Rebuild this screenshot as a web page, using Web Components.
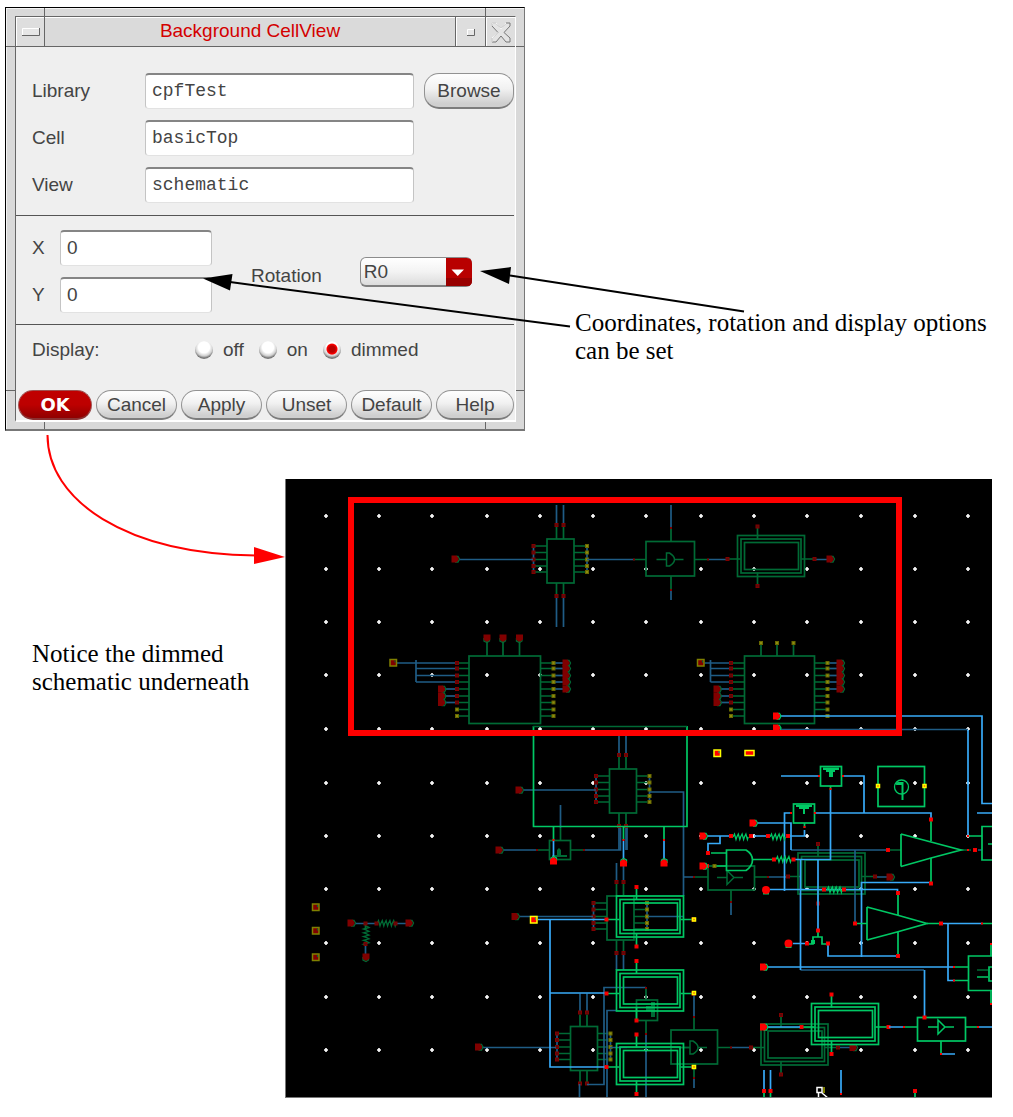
<!DOCTYPE html>
<html lang="en">
<head>
<meta charset="utf-8">
<meta name="viewport" content="width=device-width, initial-scale=1">
<title>Background CellView</title>
<style>
  body { margin: 0; background: #fff; }
</style>
</head>
<body>
<guide-figure></guide-figure>

<script>
const define = (name, html, setup) => {
  const template = document.createElement('template');
  template.innerHTML = html;
  customElements.define(name, class extends HTMLElement {
    connectedCallback() {
      if (this.shadowRoot) return;
      const root = this.attachShadow({ mode: 'open' });
      root.append(template.content.cloneNode(true));
      if (setup) setup(this, root);
    }
  });
};

/* ---- form parts ---- */

define('text-field', `
<style>
  :host { display: flex; align-items: center; height: 36px; min-width: 0; }
  label { width: var(--label-width, 113px); flex: none; }
  input {
    box-sizing: border-box; flex: 1; width: 0; min-width: 0; height: 36px; margin: 0; padding: 0 6px 1px;
    border: 1px solid #e2e2e2; border-top: 2px solid #858585; border-left-color: #c4c4c4; border-right-color: #c4c4c4;
    border-radius: 4px; background: #fff; color: #444; font: var(--field-font, 19px "Liberation Sans", sans-serif);
    outline: none;
  }
</style>
<label for="box"></label><input id="box" type="text">`, (el, root) => {
  root.querySelector('label').textContent = el.getAttribute('label');
  root.querySelector('input').value = el.getAttribute('value');
});

define('pill-button', `
<style>
  :host { display: flex; min-width: 0; }
  button {
    flex: 1; min-width: 0; margin: 0; padding: 0; border: 1px solid #929292; border-bottom: 2px solid #7c7c7c;
    border-radius: 15px; color: #444; font: inherit; line-height: 26px;
    background: linear-gradient(#fdfdfd 5%, #f1f1f1 45%, #cfcfcf 90%);
  }
  :host([primary]) button {
    border-color: #a05050; border-bottom-color: #8a3030; color: #fff;
    font: bold 18px "DejaVu Sans", sans-serif; line-height: 26px;
    background: linear-gradient(#c00000, #bd0000 50%, #900000);
  }
</style>
<button type="button"><slot></slot></button>`);

define('choice-list', `
<style>
  :host { display: flex; align-items: center; }
  .name { width: 163px; flex: none; }
  .choices { display: flex; gap: 15px; }
  label { display: flex; align-items: center; gap: 10px; line-height: 24px; }
  input {
    appearance: none; width: 18px; height: 18px; margin: 0; border-radius: 50%;
    background: radial-gradient(circle at 50% 35%, #fff 38%, #d0d0d0 58%, #777 72%);
  }
  input:checked {
    background: radial-gradient(circle at 50% 45%, #b00 0 3px, #f00 5px, transparent 6px),
      radial-gradient(circle at 50% 35%, #fff 38%, #d0d0d0 58%, #777 72%);
  }
</style>
<span class="name" id="name"></span>
<div class="choices" role="radiogroup" aria-labelledby="name"></div>`, (el, root) => {
  root.querySelector('.name').textContent = el.getAttribute('label');
  for (const option of el.getAttribute('options').split(' ')) {
    const label = document.createElement('label');
    const input = document.createElement('input');
    input.type = 'radio';
    input.name = 'display';
    input.checked = option === el.getAttribute('value');
    label.append(input, option);
    root.querySelector('.choices').append(label);
  }
});

define('rotation-select', `
<style>
  :host { display: flex; align-items: center; gap: 38px; }
  label { padding-top: 8px; }
  .wrap { position: relative; width: 112px; height: 30px; }
  select {
    appearance: none; box-sizing: border-box; width: 100%; height: 100%; margin: 0; padding: 0 3px;
    border: 1px solid #8c8c8c; border-bottom: 2px solid #808080; border-radius: 6px; color: #444; font: inherit;
    background: linear-gradient(#fff, #f3f3f3 50%, #dcdcdc);
  }
  svg { position: absolute; right: 0; top: 1px; width: 26px; height: 28px; pointer-events: none; }
</style>
<label for="rotation">Rotation</label>
<div class="wrap">
  <select id="rotation"><option>R0</option><option>R90</option><option>R180</option><option>R270</option></select>
  <svg viewBox="0 0 26 28"><path d="M0 0H21Q26 0 26 6V22Q26 28 21 28H0Z" fill="#b80000"/><path d="M0 20H26V22Q26 28 21 28H0Z" fill="#980000"/><path d="M5.500 11.500H18L11.700 18Z" fill="#fff"/></svg>
</div>`);

/* ---- dialog window ---- */

define('title-bar', `
<style>
  :host { display: flex; height: 29px; border-bottom: 1px solid #666; background: #dadada; box-shadow: inset 1px 1px #fff; }
  button { width: 30px; flex: none; margin: 0; padding: 0; border: 0; border-left: 1px solid #666; background: #dedede; box-shadow: inset 1px 1px #fff; }
  button:first-of-type { width: 29px; border-left: 0; border-right: 1px solid #666; }
  h1 { flex: 1; margin: 0; color: #d40000; font: 19px "Liberation Sans", sans-serif; line-height: 28px; text-align: center; }
  svg { display: block; }
</style>
<button type="button" aria-label="Window menu"><svg width="28" height="29"><rect x="6" y="11" width="17" height="7" fill="#e6e6e6"/><path d="M6.500 18V11.500H23" stroke="#fff" fill="none"/><path d="M6 18.500H23.500V11" stroke="#666" fill="none"/></svg></button>
<h1><slot></slot></h1>
<button type="button" aria-label="Minimize"><svg width="29" height="29"><rect x="11" y="12" width="7" height="6" fill="#e6e6e6"/><path d="M11.500 18V12.500H18" stroke="#fff" fill="none"/><path d="M11 18.500H18.500V12" stroke="#666" fill="none"/></svg></button>
<button type="button" aria-label="Close"><svg width="29" height="29"><path d="M6 6H10L15 12L20 6H24V9L18 15.500L24 21V25H20L15 19L10 25H6V21L12 15.500L6 9Z" fill="#e4e4e4" stroke="#777"/><path d="M6 21V25M6 9V6H10L15 12L20 6M6 21L12 15.500" stroke="#fff" fill="none"/></svg></button>`);

define('cell-dialog', `
<style>
  :host {
    display: block; position: relative; box-sizing: border-box; padding: 8px 8px 7px 9px;
    border: 1px solid #000; border-right-color: #777; border-bottom: 2px solid #777;
    background: #d9d9d9; box-shadow: inset 1px 1px #f4f4f4;
    color: #444; font: 19px "Liberation Sans", sans-serif;
  }
  .inner { border: 1px solid #666; border-right-color: #fff; border-bottom: 2px solid #fff; background: #efefef; }
  .fields { display: grid; grid-template-columns: 382px 1fr; gap: 11px 10px; padding: 26px 1px 12px 16px; --field-font: 18px "Liberation Mono", monospace; }
  text-field { grid-column: 1; }
  .fields pill-button { grid-column: 2; grid-row: 1; }
  hr { margin: 0 1px 0 0; border: 0; border-top: 1px solid #555; }
  .place { display: flex; gap: 39px; padding: 14px 16px 11px; }
  .coords { display: grid; grid-template-columns: minmax(0, 1fr); gap: 11px; width: 180px; --label-width: 28px; }
  .display { padding: 13px 16px 28px; }
  .actions { display: flex; gap: 4px; padding: 0 1px 0 2px; height: 30px; }
  .actions pill-button { flex: 81; }
  .actions pill-button:first-child { flex: 74; }
  .actions pill-button:last-child { flex: 78; }
  i { position: absolute; background: #666; }
  .t { top: 0; width: 1px; height: 9px; }
  .b { bottom: 0; width: 1px; height: 7px; }
  .l { left: 0; width: 9px; height: 1px; }
  .r { right: 0; width: 8px; height: 1px; }
  .x1 { left: 38px; } .x2 { right: 38px; } .y1 { top: 38px; } .y2 { bottom: 38px; }
</style>
<div class="inner">
  <title-bar>Background CellView</title-bar>
  <form>
    <div class="fields">
      <text-field label="Library" value="cpfTest"></text-field>
      <pill-button>Browse</pill-button>
      <text-field label="Cell" value="basicTop"></text-field>
      <text-field label="View" value="schematic"></text-field>
    </div>
    <hr>
    <div class="place">
      <div class="coords">
        <text-field label="X" value="0"></text-field>
        <text-field label="Y" value="0"></text-field>
      </div>
      <rotation-select></rotation-select>
    </div>
    <hr>
    <choice-list class="display" label="Display:" options="off on dimmed" value="dimmed"></choice-list>
    <div class="actions">
      <pill-button primary>OK</pill-button><pill-button>Cancel</pill-button><pill-button>Apply</pill-button>
      <pill-button>Unset</pill-button><pill-button>Default</pill-button><pill-button>Help</pill-button>
    </div>
  </form>
</div>
<i class="t x1"></i><i class="t x2"></i><i class="b x1"></i><i class="b x2"></i>
<i class="l y1"></i><i class="l y2"></i><i class="r y1"></i><i class="r y2"></i>`);

/* ---- schematic canvas ---- */

define('schematic-view', `
<style>
  :host { display: block; }
  svg { display: block; width: 100%; height: auto; background: #000; }
</style>
<svg viewBox="285 479 707 619" role="img" aria-label="Schematic with dimmed background cellview"></svg>`, (el, root) => {
  const G = '#00c864', g = '#006a35', B = '#38aaf8', b = '#1f5c85', R = '#f00', r = '#800000', Y = '#ff0', y = '#808000';
  let out = '';
  const line = (c, ...ds) => { out += `<path d="${ds.map(d => 'M' + d).join('')}" fill="none" stroke="${c}" stroke-width="1.700"/>`; };
  const box = (c, x, t, w, h) => { out += `<rect x="${x}" y="${t}" width="${w}" height="${h}" fill="none" stroke="${c}" stroke-width="1.700"/>`; };
  const dimPin = (c, edge, ...ps) => ps.forEach(([x, t]) => { out += `<rect x="${x - 1.5}" y="${t - 1.5}" width="3" height="3" fill="${c}" stroke="${edge}"/>`; });
  const redPin = (...ps) => dimPin('#5a0a0a', '#800000', ...ps);
  const brightPin = (...ps) => dimPin(R, '#f00000', ...ps);
  const yellowPin = (...ps) => dimPin('#8c8c10', '#686800', ...ps);
  const spot = (c, ...ps) => ps.forEach(([x, t]) => { out += `<rect x="${x - 1}" y="${t - 1}" width="2" height="2" fill="${c}"/>`; });
  const litPin = (...ps) => ps.forEach(([x, t]) => { out += `<rect x="${x - 1.5}" y="${t - 1.5}" width="3" height="3" fill="#f60" stroke="#ff0" stroke-width="1.500"/>`; });
  const flag = (c, e, turn, ...ps) => ps.forEach(([x, t]) => {
    out += `<g transform="translate(${x} ${t}) rotate(${turn})"><path d="M1 -2.500H3L4.500 0L3 3H0" fill="none" stroke="${e}" stroke-width="1.300"/><path d="M-3.500 -3.500H1.500L3.500 -1V1L1.500 3.500H-3.500Z" fill="${c}"/></g>`;
  });
  const tag = (x, t, c, f) => { out += `<rect x="${x - 3}" y="${t - 3}" width="6.500" height="6.500" fill="${f}" stroke="${c}" stroke-width="1.500"/><path d="M${x + 2} ${t - 2}v2" stroke="${c === Y ? G : g}"/>`; };
  const res = (c, x, t, n, turn = 0) => { let d = '0 0'; for (let i = 0; i < n; i++) d += `l1.500 -3l1.500 5.500l.8 -2.500`; out += `<path transform="translate(${x} ${t}) rotate(${turn})" d="M${d}" fill="none" stroke="${c}" stroke-width="1.300"/>`; };
  const gate = (c, x, t) => { out += `<path d="M${x} ${t - 6.5}h3q5 3 5 6.500q0 3.500 -5 6.500h-3ZM${x - 10} ${t}h10M${x + 8} ${t}h9" fill="none" stroke="${c}" stroke-width="1.500"/>`; };
  const buffer = (c, x, t) => { out += `<path d="M${x} ${t - 7}l7 7l-7 7ZM${x - 10} ${t}h10M${x + 7} ${t}h9" fill="none" stroke="${c}" stroke-width="1.500"/>`; };

  // grid
  for (const gx of [326, 379, 432, 487, 540, 593, 646, 701, 754, 807, 861, 915, 968])
    for (const gy of [516, 569, 622, 675, 729, 783, 836, 889, 943, 997, 1050])
      out += `<path d="M${gx - 2} ${gy}h4M${gx} ${gy - 2}v4" stroke="#fff" stroke-width="1.600"/>`;

  // small dim block with five pins on each side
  const chip = (x, t, up, down) => {
    box(g, x, t, 27, 44);
    const ys = [7, 13.5, 20.5, 27, 33].map(v => t + v);
    line(b, `${x - 13.5} ${ys[0]}V${ys[4]}`, `${x + 40} ${ys[0]}V${ys[4]}`);
    ys.forEach(v => line(g, `${x - 12} ${v}H${x}`, `${x + 27} ${v}H${x + 38}`));
    ys.forEach(v => { redPin([x - 13.5, v]); yellowPin([x + 40, v]); });
    for (const c of [x + 9.5, x + 16.5]) {
      line(g, `${c} ${t}V${t - 12}`, `${c} ${t + 44}V${t + 56}`);
      line(b, `${c} ${t - 15}V${t - up}`, `${c} ${t + 59}V${t + down}`);
      redPin([c, t - 14], [c, t + 57]);
    }
  };
  chip(547, 539, 34, 88);
  chip(609.5, 769, 34, 81);
  chip(607, 896, 33, 74);
  chip(570.5, 1026.5, 33, 59);

  // triple-outlined block
  const triple = (dim, x, t) => {
    const c = dim ? g : G;
    box(c, x, t, 67, 41); box(c, x + 3.5, t + 3.5, 60, 34); box(c, x + 7, t + 7, 54, 27);
    line(c, `${x + 20} ${t - 8}V${t + 4}`, `${x + 20} ${t + 37}V${t + 50}`, `${x - 9} ${t + 23.5}H${x + 3}`, `${x + 64} ${t + 23.5}H${x + 76}`);
    (dim ? redPin : brightPin)([x + 20, t - 9], [x + 20, t + 50.5], [x - 10, t + 23.5], [x + 77, t + 23.5]);
  };

  // upper dim row
  line(b, '459 559.5H533', '587 559.5H634', '671 505V528', '671 590V600', '708 559.5H727', '816 559.5H827');
  line(g, '634 559.5H646', '671 528V541', '671 576V590', '694 559.5H708');
  flag(r, g, 0, [455, 559], [830, 559]);
  box(g, 646, 541.5, 48.500, 34.500); gate(g, 666.5, 559.5);
  spot(r, [634, 559.5], [671, 528], [671, 590], [708, 559.5]);
  triple(true, 737.5, 535.5);

  // large dim blocks
  const bank = [663, 668.5, 675.5, 682, 689, 696, 702.5, 709.5, 716];
  const large = (x, w, lx, rx, bus, fl, fr, tx) => {
    box(g, x, 656, w, 67.500);
    line(b, `${tx + 4} 663H${lx}`, `${bus} 660V682`, `${bus} 668.5H${lx}`, `${bus} 675.5H${lx}`, `${bus} 682H${lx}`);
    bank.forEach((v, i) => {
      line(g, `${lx} ${v}H${x}`, `${x + w} ${v}H${rx}`);
      if (i > 3 && i < 7) { line(b, `${fl} ${v}H${lx}`); flag(r, g, 0, [fl, v]); }
      if (i < 5) { line(b, `${rx} ${v}H${fr}`); flag(r, g, 0, [fr, v]); }
      (i < 7 ? redPin : yellowPin)([lx, v]); yellowPin([rx, v]);
    });
    tag(tx, 662.5, y, r);
  };
  large(469, 71.5, 457, 553.5, 416, 441.5, 566, 393);
  large(744.5, 70, 731, 827.5, 710.5, 717, 840, 700.5);
  line(g, '487 640V656', '503 640V656', '519.5 640V656', '761 645V656', '777 645V656', '793.5 645V656');
  flag(r, g, 90, [487, 638], [503, 638], [519.5, 638]);
  yellowPin([761, 643], [777, 643], [793.5, 643]);

  // left dim parts
  [907, 930.5, 957].forEach(v => tag(315.5, v, y, r));
  line(b, '355 923.5H376', '395 923.5H408', '365.5 944V956'); line(g, '365.5 924V930');
  res(g, 377, 923.5, 5); res(g, 366, 926, 5, 90);
  redPin([365.5, 923.5], [376.5, 923.5], [395.5, 923.5], [365.5, 944]);
  flag(r, g, 0, [351, 923], [409, 923]); flag(r, g, 90, [366, 957]);

  // centre dim wiring
  line(b, '523 790H596', '650 792H683.5V896', '560.5 805V828', '503 850H537', '584 850H620.5V828', '627 828V850', '683.5 877H694',
    '519 916.5H593', '648 916.5H683.5', '482 1047.5H556', '610 1047.5H627', '587 1084.500H604V987.500H646', '607 1098V1010.5H616', '646 1034V1098', '579.5 1084V1098',
    '731 902V915', '768 877H788', '876 877H888', '694 995V1017', '694 1078V1088', '731 1047.5H750', '838 1047.5H850');
  line(g, '537 850H549', '571 850H584', '560.5 828V840', '694 877H708', '731 890V902', '754 877H768', '627 1047.5H690', '694 1017V1030', '694 1067V1078', '717.5 1047.5H731', '646 989V1000', '646 1020V1034');
  flag(r, g, 0, [519, 790], [499, 850], [515, 916.5], [478.5, 1047], [890, 877], [853, 1047.5]);
  box(g, 549.5, 840.5, 21, 19); out += `<path d="M552 855h15v2h-15ZM557 855v-5l2-2l2 2v5Z" fill="${g}"/>`;
  box(g, 636.5, 1000, 21, 20.500); out += `<path d="M646 1006h5v-4h4v15h-4v-6h-5Z" fill="${g}"/>`;
  box(g, 708, 866, 46.500, 24); buffer(g, 727, 877.5);
  box(g, 671, 1030, 46.500, 34); gate(g, 690, 1047.5);
  spot(r, [537, 850], [584, 850], [694, 877], [768, 877], [731, 902], [694, 1017], [694, 1078], [731, 1047.5], [646, 988], [646, 1034]);
  triple(true, 798, 853); triple(true, 761, 1024);

  // bright frame
  line(G, '533.5 726V826.5H687V726', '553.5 827V840', '623.5 827V840', '664 827V840'); line(g, '533 726.5H687');
  line(B, '553.5 841V858', '623.5 841V860', '664 841V860');
  spot(R, [553.5, 840], [623.5, 840], [664, 840]);
  flag(R, G, -90, [553.5, 861], [623.5, 863], [664, 863]);

  // bright triples
  line(B, '538 919.5H607', '550 919.5V1067H607', '550 993H607');
  [896, 970, 1043.5].forEach(t => triple(false, 616.5, t));
  litPin([694, 919.5], [694, 993], [694, 1067]);
  tag(533.5, 919.5, Y, R);
  triple(false, 811.5, 1003.5);

  // right-hand wiring
  line(b, '780 729.5H968', '791 850H887', '855 850V923', '978 850H982', '800.5 970H924');
  line(B, '780 716H982V803.5H992', '968 730V836', '977 813H992', '781 776H819', '843 776H864V813', '830.5 790V859.5H794', '791 813H784.5V891', '815 813H931V819', '804.5 830V836H788',
    '757 823H791V850', '707 836H731', '754 836H768', '720 836V843.5H708V852', '800.5 859V970M924.5 970V1017', '818 860V930', '770 889.5H897.5V893', '861.5 957V882.5H931',
    '828 945V956H898', '793 943.5H806', '943 923.5H982', '948 924V980.5H955', '767 967H954', '767 1027H800', '889 1027H904', '978 1027H992', '941 1054H955', '764 1070V1091', '770.5 1070V1091', '841 1070V1094');
  line(G, '969 836H982', '931 820V841', '931 858V883', '752.500 859.500H773', '711 853H727', '716 866H727', '898 894V915', '898 932V956', '857 923.5H867', '927 923.5H941', '982 923.5H992',
    '955 967H968', '955 980.5H968', '991 944V956', '991 990V1004', '904 1027H917', '966 1027H978', '941 1041V1054', '830.5 786V790', '804.5 823V828', '764 1093V1098', '770.5 1093V1098', '915 1093V1098',
    '977 977H988', '992 967H989V981H992', '988 844H992');
  line(g, '890 850H901', '961 850H971', '977 970H988');
  box(G, 820.5, 766.5, 21, 19.500); out += `<path d="M823 767.500H839V770H835V772H833V777H829V772H826V770H823Z" fill="${G}"/>`;
  box(G, 793.500, 804, 21, 19); out += `<path d="M796 805H812V807H809V809H805V814H803V809H799V807H796Z" fill="${G}"/>`;
  box(G, 878, 766.500, 46.500, 40); out += `<circle cx="901.500" cy="787" r="7" fill="none" stroke="${G}" stroke-width="1.300"/><path d="M896 784.500l2-1.500h4.500v17M902 784h-5" fill="none" stroke="${G}" stroke-width="2"/>`;
  litPin([878, 786], [924.500, 786]);
  line(G, '901 834V866.5', '901 834L931 842L961 850L931 858L901 866.5', '867 907V940', '867 907L897 915L927 923.5L897 932L867 940');
  out += `<path d="M746 850H726.500V870.500H746Q752.500 866 752.500 860Q752.500 854 746 850Z" fill="none" stroke="${G}" stroke-width="1.700"/>`;
  line(G, '992 826.5H982V860H992', '992 956H968.500V990.5H992', '809 944H813V937H822V944H826', '818 931V937');
  out += `<rect x="811" y="940" width="4" height="4" fill="${G}"/>`;
  box(G, 917.5, 1017.5, 48, 23.500); buffer(G, 938, 1027);
  res(G, 733, 837, 4); res(G, 770, 837, 4); res(G, 776, 859.5, 4); res(G, 827, 890, 4);
  spot(R, [968, 836], [968, 850], [982, 923.500], [954, 967], [954, 980.5], [991, 944], [991, 1004], [904, 1027], [978, 1027], [941, 1054], [819, 776], [843, 776], [791, 813], [815, 813], [830.5, 789], [804.5, 827], [841, 1094]);
  brightPin([931, 819.5], [888, 850], [975, 850], [931, 883.5], [731, 836], [751, 836], [768, 836], [788, 836], [708, 853], [707, 866], [774, 859.5], [793.5, 859.5], [824, 889.5], [844, 889.5],
    [898, 893], [855, 923.5], [941, 923.5], [898, 956], [828, 943.5], [807, 943.5], [818, 930.5], [924.5, 1017.500], [764, 1091], [770.5, 1091], [915, 1091]);
  yellowPin([714.5, 866]);
  flag(R, G, 0, [776.500, 716], [776.500, 728], [753, 823], [703, 836], [703, 866], [763.500, 967], [763.500, 1027]);
  for (const [cx, cy] of [[766, 890], [788.500, 943.500]]) out += `<path d="M${cx - 3} ${cy + 3.500}h6" stroke="${G}" stroke-width="2"/><circle cx="${cx}" cy="${cy}" r="4" fill="${R}"/>`;
  tag(717, 753, Y, R);
  out += `<rect x="745" y="750.500" width="9" height="5" fill="${R}" stroke="${Y}" stroke-width="1.500"/>`;

  // pointer, selection frame, window edge
  out += `<path d="M824 1087v6" stroke="${Y}"/><path d="M817 1087.500h5v5h-5ZM818.500 1093v5M822 1093l6 5" fill="none" stroke="#fff" stroke-width="1.500"/>`;
  out += `<rect x="351" y="500" width="548" height="233" fill="none" stroke="#f00" stroke-width="6"/>`;
  out += `<path d="M285 1097.500H992M285.500 479V1098" stroke="#777"/>`;
  root.querySelector('svg').innerHTML = out;
});

/* ---- figure ---- */

define('figure-note', `
<style>
  :host { display: block; color: #000; font: 25px "Liberation Serif", serif; line-height: 28px; }
  p { margin: 0; }
</style>
<p><slot></slot></p>`);

define('callout-arrows', `
<style>
  :host { display: block; position: absolute; left: 0; top: 0; pointer-events: none; }
  svg { display: block; }
</style>
<svg width="760" height="580" aria-hidden="true">
  <path d="M570 326.500L230 282M744 311.500L510 275.500" stroke="#000" stroke-width="2"/>
  <path d="M203 278.500L232.500 274L230 290.500ZM480 271L511 267L509 284Z"/>
  <path d="M47.500 435C47.500 500 125 554 257 555.500" fill="none" stroke="red" stroke-width="2"/>
  <path d="M254 547L285 557L254 564Z" fill="red"/>
</svg>`);

define('guide-figure', `
<style>
  :host { display: flex; flex-direction: column; gap: 48px; position: relative; padding: 7px 21px 19px 5px; }
  .top, .bottom { display: flex; align-items: flex-start; }
  cell-dialog { flex: 0 0 520px; }
  .options { padding: 302px 0 0 50px; }
  .dimmed { box-sizing: border-box; flex: 0 0 280px; padding: 161px 0 0 27px; }
  schematic-view { flex: 1; min-width: 0; }
</style>
<div class="top">
  <cell-dialog></cell-dialog>
  <figure-note class="options">Coordinates, rotation and display options<br>can be set</figure-note>
</div>
<div class="bottom">
  <figure-note class="dimmed">Notice the dimmed<br>schematic underneath</figure-note>
  <schematic-view></schematic-view>
</div>
<callout-arrows></callout-arrows>`);
</script>
</body>
</html>
